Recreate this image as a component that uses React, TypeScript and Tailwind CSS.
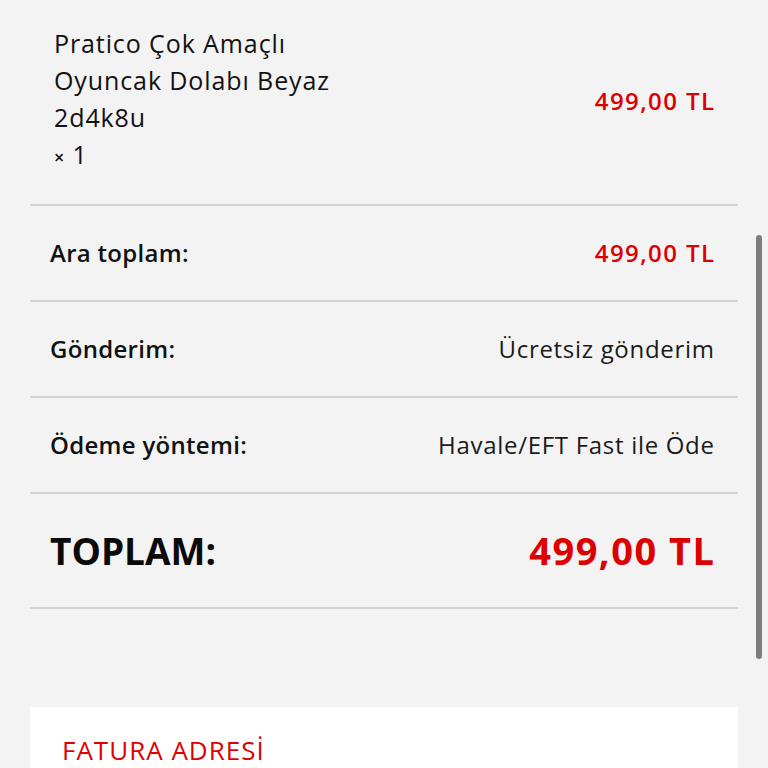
import React from "react";

const font = { fontFamily: '"Open Sans", "Noto Sans", sans-serif' };

function Row({ label, value, red }: { label: string; value: string; red?: boolean }) {
  return (
    <div className="flex h-[96px] items-center justify-between pl-[20px] pr-[24px] border-b-2 border-[#d3d3d3]">
      <span className="text-[24px] font-semibold tracking-[0.3px] text-[#111111]">{label}</span>
      <span
        className={
          red
            ? "mr-[-1.4px] text-[24px] font-semibold tracking-[1.4px] text-[#dd0000]"
            : "mr-[-0.7px] text-[24px] font-normal tracking-[0.7px] text-[#1a1a1a]"
        }
      >
        {value}
      </span>
    </div>
  );
}

export default function App() {
  return (
    <div className="relative h-[768px] w-[768px] overflow-hidden bg-[#f3f3f3]" style={font}>
      <div className="mx-[30px]">
        <div className="flex items-center justify-between pl-[24px] pr-[24px] pt-[25px] pb-[28px] border-b-2 border-[#d3d3d3]">
          <div className="text-[25px] leading-[37px] tracking-[0.9px] text-[#111111]">
            <div>Pratico Çok Amaçlı</div>
            <div>Oyuncak Dolabı Beyaz</div>
            <div>2d4k8u</div>
            <div>
              <span className="text-[18px] font-semibold">×</span> 1
            </div>
          </div>
          <span className="mr-[-1.4px] text-[24px] font-semibold tracking-[1.4px] text-[#dd0000]">499,00 TL</span>
        </div>
        <Row label="Ara toplam:" value="499,00 TL" red />
        <Row label="Gönderim:" value="Ücretsiz gönderim" />
        <Row label="Ödeme yöntemi:" value="Havale/EFT Fast ile Öde" />
        <div className="flex h-[115px] items-center justify-between pl-[20px] pr-[24px] border-b-2 border-[#d3d3d3]">
          <span className="text-[37px] font-bold text-[#0a0a0a]">TOPLAM:</span>
          <span className="mr-[-1.5px] text-[38px] font-bold tracking-[1.5px] text-[#dd0000]">499,00 TL</span>
        </div>
        <div className="mt-[98px] bg-white px-[32px] pt-[24px] pb-[40px]">
          <div className="text-[26px] tracking-[1px] text-[#e00000]">FATURA ADRESİ</div>
        </div>
      </div>
      <div className="absolute left-[756px] top-[235px] h-[424px] w-[6px] rounded-full bg-[#7d7d7d]" />
    </div>
  );
}
